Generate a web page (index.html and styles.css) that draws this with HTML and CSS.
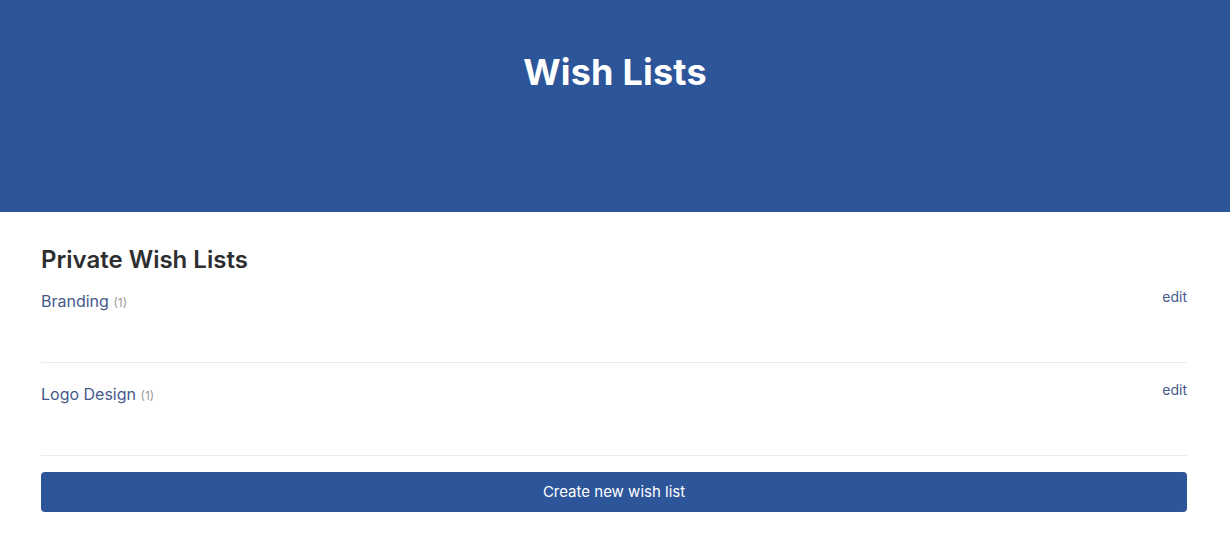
FILE: index.html
```html
<!DOCTYPE html>
<html>
<head>
<meta charset="utf-8">
<link rel="stylesheet" href="styles.css">
</head>
<body>
<header class="hero">
  <h1 class="hero-title">Wish Lists</h1>
</header>
<main class="content">
  <h2 class="section-title">Private Wish Lists</h2>
  <ul class="lists">
    <li class="list-row">
      <span class="list-name"><a href="#">Branding</a> <span class="count">(1)</span></span>
      <a class="edit" href="#">edit</a>
    </li>
    <li class="list-row">
      <span class="list-name"><a href="#">Logo Design</a> <span class="count">(1)</span></span>
      <a class="edit" href="#">edit</a>
    </li>
  </ul>
  <button class="create-btn">Create new wish list</button>
</main>
</body>
</html>
```
FILE: styles.css
```css
* { box-sizing: border-box; }
html, body { margin: 0; padding: 0; background: #fff; }
body { font-family: Inter, "Noto Sans", sans-serif; }
.hero {
  background: #2d559a;
  height: 212px;
  display: flex;
  justify-content: center;
  align-items: flex-start;
}
.hero-title {
  margin: 49px 0 0;
  color: #fff;
  font-size: 36px;
  line-height: 46px;
  font-weight: 700;
  letter-spacing: 0.2px;
}
.content { padding: 0 43px 0 41px; }
.section-title {
  margin: 33px 0 0;
  font-size: 24px;
  line-height: 30px;
  font-weight: 600;
  color: #2e2e30;
}
.lists { list-style: none; margin: 15px 0 0; padding: 0; }
.list-row {
  display: flex;
  justify-content: space-between;
  align-items: flex-start;
  padding: 20px 0 48px;
  border-bottom: 1px solid #ebebeb;
  line-height: 22px;
}
.list-row:first-child { padding-top: 0; }
.list-name { font-size: 16px; line-height: 22px; }
.list-name a { color: #45598a; text-decoration: none; }
.count { color: #9a9a9a; font-size: 12px; }
.edit {
  color: #45598a;
  font-size: 14px;
  line-height: 16px;
  margin-top: -1px;
  text-decoration: none;
}
.create-btn {
  display: block;
  width: 100%;
  margin-top: 16px;
  height: 40px;
  padding: 0 0 1px;
  border: none;
  border-radius: 4px;
  background: #2d559a;
  color: #fff;
  font-family: Inter, "Noto Sans", sans-serif;
  font-size: 15px;
}
```
